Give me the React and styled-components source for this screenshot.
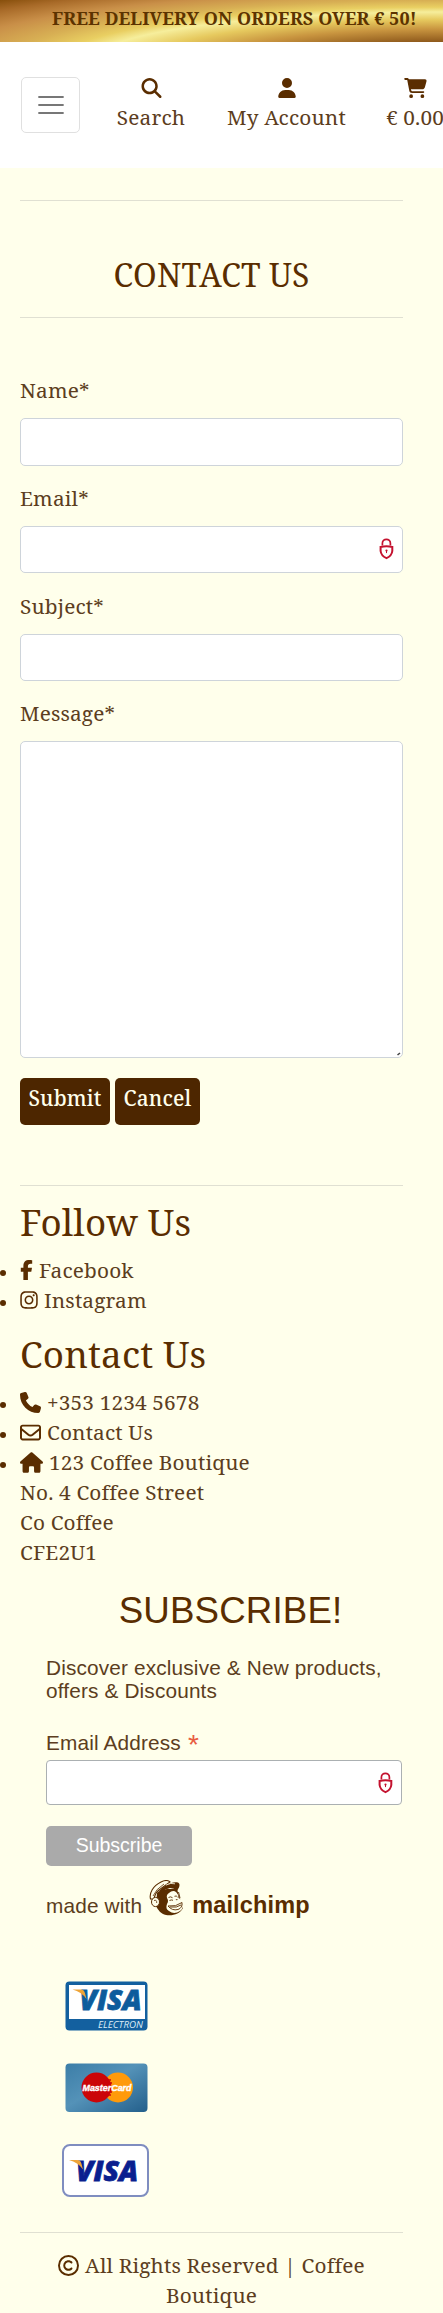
import React from "react";
import styled, { createGlobalStyle } from "styled-components";
import {
  FaMagnifyingGlass, FaUser, FaCartShopping, FaFacebookF, FaInstagram,
  FaPhone, FaRegEnvelope, FaHouse, FaRegCopyright,
} from "react-icons/fa6";

const brown = "#5a2d00";
const text = "#5c3d20";
const cream = "#ffffeb";
const serif = '"Noto Serif", "DejaVu Serif Condensed", "DejaVu Serif", serif';
const sans = '"Liberation Sans", Arial, sans-serif';

const GlobalStyle = createGlobalStyle`
  *, *::before, *::after { box-sizing: border-box; }
  html, body { margin: 0; background: ${cream}; overflow-x: hidden; }
  body { font-family: ${serif}; font-size: 20.8px; line-height: 30px; letter-spacing: .15px; color: ${text}; }
  h1, h2, p, ul { margin: 0; padding: 0; font-weight: 400; }
`;

const Page = styled.div`
  width: 443px;
  height: 2313px;
  overflow: hidden;
  background: ${cream};
`;

const Banner = styled.div`
  height: 42px;
  padding: 3px 0 0 52px;
  font-size: 18px;
  font-weight: 700;
  line-height: 30px;
  letter-spacing: .09px;
  white-space: nowrap;
  color: #5c3300;
  background: radial-gradient(ellipse 696px 96px at 443px 60px,
    #7a4208 0%, #8f5a1c 19%, #c8943f 32%, #e6c95e 42%, #f6ee9c 50%,
    #e9cf62 55%, #d8b054 62%, #c98f48 72%, #a86a28 82%, #7a4400 92%);
`;

const Nav = styled.nav`
  height: 126px;
  padding: 35px 0 0 21px;
  display: flex;
  align-items: flex-start;
  background: #fff;
`;

const MenuButton = styled.button`
  flex: none;
  width: 59px;
  height: 56px;
  padding: 0;
  display: grid;
  place-items: center;
  background: none;
  border: 1px solid #e0e0e0;
  border-radius: 5px;
`;

const NavItem = styled.a`
  flex: none;
  width: ${(p) => p.$w}px;
  margin-left: ${(p) => p.$gap}px;
  display: flex;
  flex-direction: column;
  align-items: center;
  white-space: nowrap;
  svg { height: 20px; margin: 1px 0 9px; color: ${brown}; }
  span { line-height: 20px; }
`;

const Main = styled.main`
  width: 383px;
  margin: 0 0 0 20px;
`;

const Rule = styled.hr`
  height: 1px;
  margin: ${(p) => p.$top || 0}px 0 0;
  border: 0;
  background: #e0e0d2;
`;

const Title = styled.h1`
  padding: 55px 0 23px;
  font-size: 31.9px;
  line-height: 38px;
  text-align: center;
  color: ${brown};
`;

const Form = styled.form`
  padding-top: 57px;
`;

const Field = styled.label`
  display: block;
  height: ${(p) => p.$h || 107.75}px;
`;

const FieldName = styled.span`
  display: block;
  height: 43px;
`;

const Control = styled.span`
  position: relative;
  display: block;
  width: ${(p) => (p.$w ? `${p.$w}px` : "auto")};
`;

const Input = styled.input`
  display: block;
  width: 100%;
  height: ${(p) => p.$h || 47.6}px;
  border: 1px solid ${(p) => p.$line || "#ced4da"};
  border-radius: ${(p) => p.$r || 5}px;
  background: #fff;
`;

const TextArea = styled.textarea`
  display: block;
  width: 100%;
  height: 317px;
  border: 1px solid #ced4da;
  border-radius: 5px;
  background: #fff;
  resize: none;
`;

const Grip = styled.svg`
  position: absolute;
  right: 2px;
  bottom: 2px;
`;

const LockBadge = styled.svg`
  position: absolute;
  right: 9px;
  top: 12px;
`;

const Buttons = styled.div`
  display: flex;
  gap: 5px;
`;

const Button = styled.button`
  width: ${(p) => p.$w}px;
  height: 47px;
  padding: 0 0 7px;
  border: 0;
  border-radius: 5px;
  background: #4d2600;
  color: #ffffeb;
  font: inherit;
  font-weight: 500;
  letter-spacing: inherit;
  text-align: center;
`;

const Heading = styled.h2`
  padding-top: ${(p) => p.$top}px;
  height: ${(p) => p.$h}px;
  font-size: 36.8px;
  line-height: 44px;
  color: ${brown};
`;

const List = styled.ul`
  list-style: none;
`;

const Item = styled.li`
  height: 30px;
  padding-bottom: 2px;
  display: flex;
  align-items: center;
  white-space: nowrap;
  &::before {
    content: "";
    flex: none;
    width: 6px;
    height: 6px;
    margin: 5px 14px 0 -20px;
    border-radius: 50%;
    background: ${(p) => (p.$plain ? "transparent" : brown)};
  }
  svg { flex: none; margin-right: 6px; color: ${brown}; }
`;

const Signup = styled.section`
  margin-left: 26px;
  padding-top: 21px;
  font-family: ${sans};
`;

const SignupTitle = styled.h2`
  font-size: 36.7px;
  line-height: 44px;
  text-align: center;
  padding-left: 12px;
  color: ${brown};
`;

const Pitch = styled.p`
  padding-top: 23px;
  line-height: 23px;
  white-space: nowrap;
`;

const EmailLabel = styled.div`
  margin-top: 29px;
  height: 29px;
  display: flex;
  gap: 7px;
  line-height: 23px;
  i { font-style: normal; font-size: 28px; line-height: 28px; color: #e85c41; }
`;

const SubscribeButton = styled.button`
  display: block;
  width: 146px;
  height: 40px;
  margin-top: 21px;
  padding: 0 0 1px;
  border: 0;
  border-radius: 5px;
  background: #aaa;
  color: #fff;
  font-family: ${sans};
  font-size: 19.5px;
`;

const MadeWith = styled.div`
  display: flex;
  height: 52px;
  padding-top: 14px;
  line-height: 24px;
  & > span { padding-top: 14px; }
  & > svg { flex: none; margin: 0 7px 0 7px; }
  b { padding-top: 13px; font-size: 23.5px; color: ${brown}; }
`;

const Cards = styled.div`
  padding: 63px 0 0 42px;
  display: flex;
  flex-direction: column;
  svg { display: block; }
`;

const CardRow = styled.div`
  height: ${(p) => p.$h}px;
  margin-left: ${(p) => p.$x || 0}px;
`;

const Footer = styled.footer`
  padding-top: 17px;
  text-align: center;
  white-space: nowrap;
  svg { color: ${brown}; vertical-align: -3px; margin-right: 6px; }
`;

const Lock = () => (
  <LockBadge width="15" height="22" viewBox="0 0 15 22" fill="none" stroke="#c4122f">
    <path d="M3.4 7.6V5.3a4 4 0 0 1 8 0V7.6" strokeWidth="1.7" />
    <path d="M1.6 8.9Q7.5 7.7 13.3 8.9V13Q12.8 17.7 7.5 20.2Q2.1 17.7 1.6 13Z" strokeWidth="2" />
    <circle cx="7.5" cy="12.6" r="1.1" fill="#c4122f" stroke="none" />
    <path d="M7.5 12.8v2.3" strokeWidth="1" />
  </LockBadge>
);

const Chimp = () => (
  <svg width="36" height="36" viewBox="0 0 36 36">
    <path d="M8 13C10 10 13 11 18 9L28 9L30 16L33 23L34 28C31 34 24 36 17 35C12 34 9 30 7 26Z" fill={brown} />
    <path d="M1.5 19C0 13 4 6 12 2C16 0 19 0 21 2L10 10Q6 13 5 19Z" fill={cream} stroke={brown} strokeWidth="1.1" />
    <path d="M4 16Q7 9 15 4" fill="none" stroke={brown} strokeWidth=".8" />
    <path d="M10 11C16 5 23 1 29 2.5C32 4 30 8 28 11Q25 8 21 8Q16 9 13 12Z" fill={brown} />
    <path d="M17 5Q22 2.5 26 3.8" fill="none" stroke={cream} strokeWidth=".8" />
    <path d="M20 13Q24 9.5 27.5 12.5Q30 15 29.5 18Q35 20 33.5 24Q35 28 31 31Q25 35 20 31Q16 29 18 24Q20 21 18 18Q17 15 20 13Z" fill={cream} />
    <path d="M19.5 17.5q2-1.4 4 .2M25.5 16.3q2-1 3 .8M20.5 20.5q2-1 3.5-.2M27 19q.5 1.5 1.5.6" fill="none" stroke={brown} strokeWidth=".9" />
    <path d="M19 26Q27 27 33 22.5Q33.5 28 29 29.5Q23 31 19 26ZM21 27Q28 28 32 25" fill="none" stroke={brown} strokeWidth=".9" />
    <path d="M29.5 12L31 18" stroke={brown} strokeWidth=".9" />
    <ellipse cx="6.5" cy="22" rx="4" ry="4.6" fill={cream} stroke={brown} strokeWidth="1" />
    <path d="M5 20.5q3-1 2.7 2.5" fill="none" stroke={brown} strokeWidth=".8" />
  </svg>
);

const VisaMark = ({ fill }) => (
  <g letterSpacing="0">
    <text x="16" y="29" fill={fill} stroke={fill} strokeWidth=".8" fontFamily="Open Sans" fontStyle="italic" fontWeight="800" fontSize="29" textLength="62" lengthAdjust="spacingAndGlyphs">VISA</text>
    <path d="M9 8.6H17Q20.5 8.6 21.4 12L23 18Q18 11 9 8.6Z" fill="#eea437" />
  </g>
);

const VisaElectron = () => (
  <svg width="84" height="50" viewBox="0 0 84 50">
    <rect x=".5" y=".5" width="82" height="49" rx="4" fill="#13609f" />
    <path d="M4 4H80V38H4Z" fill="#fff" />
    <g transform="translate(-1.5 0)"><VisaMark fill="#0d5c9c" /></g>
    <text x="33" y="46.5" fill="#dcecf6" fontFamily="Open Sans" fontStyle="italic" fontSize="8.5" letterSpacing="0" textLength="45" lengthAdjust="spacingAndGlyphs">ELECTRON</text>
  </svg>
);

const MasterCard = () => (
  <svg width="84" height="50" viewBox="0 0 84 50">
    <defs>
      <linearGradient id="mc" x1="0" y1="0" x2="1" y2="1">
        <stop offset="0" stopColor="#3c7ea8" />
        <stop offset=".45" stopColor="#5492b8" />
        <stop offset="1" stopColor="#235f8b" />
      </linearGradient>
    </defs>
    <rect x=".5" y=".5" width="82" height="48.5" rx="4" fill="url(#mc)" />
    <circle cx="53" cy="24.5" r="15" fill="#ff9a0a" />
    <circle cx="31.5" cy="24.5" r="15" fill="#cb0508" />
    <path d="M40 17h6M39 20h8M38 29h9M39 32h7" stroke="#cb0508" strokeWidth="1.4" />
    <text x="17.5" y="28" fill="#fff" stroke="#fff" strokeWidth=".4" fontFamily="Liberation Sans" fontStyle="italic" fontWeight="700" fontSize="9.5" letterSpacing="0" textLength="49" lengthAdjust="spacingAndGlyphs">MasterCard</text>
  </svg>
);

const Visa = () => (
  <svg width="88" height="54" viewBox="0 0 88 54">
    <rect x="1" y="1" width="85" height="51" rx="7" fill="#fff" stroke="#7f8dc0" strokeWidth="2" />
    <g transform="translate(-2 7.5)"><VisaMark fill="#0a1f8f" /></g>
  </svg>
);

export default function App() {
  return (
    <Page>
      <GlobalStyle />
      <Banner>FREE DELIVERY ON ORDERS OVER € 50!</Banner>
      <Nav>
        <MenuButton aria-label="Menu">
          <svg width="26" height="18" viewBox="0 0 26 18" stroke="#777" strokeWidth="1.8" strokeLinecap="round">
            <path d="M1 1H25M1 9H25M1 17H25" />
          </svg>
        </MenuButton>
        <NavItem $w={68} $gap={37}><FaMagnifyingGlass size={21} /><span>Search</span></NavItem>
        <NavItem $w={119} $gap={42}><FaUser size={20} /><span>My Account</span></NavItem>
        <NavItem $w={58} $gap={40}><FaCartShopping size={23} /><span>€ 0.00</span></NavItem>
      </Nav>
      <Main>
        <Rule $top={32} />
        <Title>CONTACT US</Title>
        <Rule />
        <Form onSubmit={(e) => e.preventDefault()}>
          <Field><FieldName>Name*</FieldName><Input /></Field>
          <Field><FieldName>Email*</FieldName><Control><Input type="email" /><Lock /></Control></Field>
          <Field><FieldName>Subject*</FieldName><Input /></Field>
          <Field $h={380}>
            <FieldName>Message*</FieldName>
            <Control>
              <TextArea />
              <Grip width="4" height="4" viewBox="0 0 4 4"><path d="M.5 3L3 1" stroke="#444" strokeWidth="1.6" /></Grip>
            </Control>
          </Field>
          <Buttons>
            <Button $w={90}>Submit</Button>
            <Button $w={85}>Cancel</Button>
          </Buttons>
        </Form>
        <Rule $top={60} />
        <Heading $top={14} $h={70}>Follow Us</Heading>
        <List>
          <Item><FaFacebookF style={{ width: 13, height: 20 }} />Facebook</Item>
          <Item><FaInstagram style={{ width: 18, height: 20 }} />Instagram</Item>
        </List>
        <Heading $top={16} $h={72}>Contact Us</Heading>
        <List>
          <Item><FaPhone size={21} />+353 1234 5678</Item>
          <Item><FaRegEnvelope size={21} />Contact Us</Item>
          <Item><FaHouse size={23} />123 Coffee Boutique</Item>
          <Item $plain>No. 4 Coffee Street</Item>
          <Item $plain>Co Coffee</Item>
          <Item $plain>CFE2U1</Item>
        </List>
        <Signup>
          <SignupTitle>SUBSCRIBE!</SignupTitle>
          <Pitch>Discover exclusive &amp; New products,<br />offers &amp; Discounts</Pitch>
          <EmailLabel>Email Address <i>*</i></EmailLabel>
          <Control $w={356}><Input type="email" $h={45} $r={4} $line="#abb0b2" /><Lock /></Control>
          <SubscribeButton>Subscribe</SubscribeButton>
          <MadeWith><span>made with</span><Chimp /><b>mailchimp</b></MadeWith>
        </Signup>
        <Cards>
          <CardRow $h={82} $x={3}><VisaElectron /></CardRow>
          <CardRow $h={81} $x={3}><MasterCard /></CardRow>
          <CardRow $h={54}><Visa /></CardRow>
        </Cards>
        <Rule $top={34} />
        <Footer>
          <FaRegCopyright size={21} />All Rights Reserved | Coffee<br />Boutique
        </Footer>
      </Main>
    </Page>
  );
}
